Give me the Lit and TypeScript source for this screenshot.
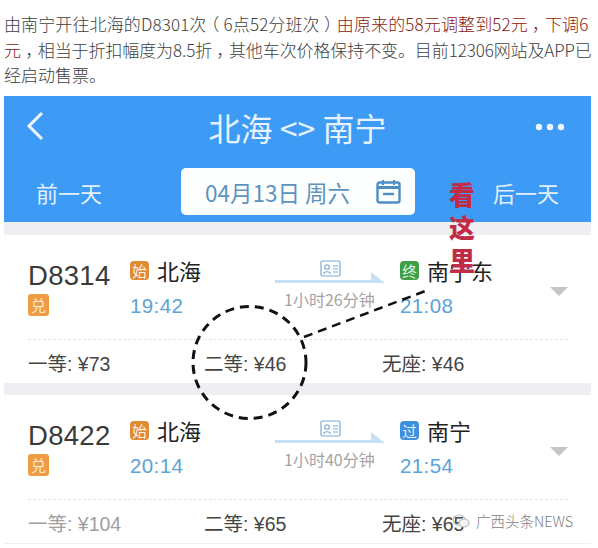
import { LitElement, html, css, svg } from "lit";
import { customElement } from "lit/decorators.js";

interface Train { no: string; from: string; dep: string; dur: string; toTag: string; tagClass: string; to: string; arr: string; p1: string; p2: string; p3: string; dim?: boolean }

const trains: Train[] = [
  { no: "D8314", from: "北海", dep: "19:42", dur: "1小时26分钟", toTag: "终", tagClass: "green", to: "南宁东", arr: "21:08", p1: "一等: ¥73", p2: "二等: ¥46", p3: "无座: ¥46" },
  { no: "D8422", from: "北海", dep: "20:14", dur: "1小时40分钟", toTag: "过", tagClass: "blue", to: "南宁", arr: "21:54", p1: "一等: ¥104", p2: "二等: ¥65", p3: "无座: ¥65", dim: true },
];

@customElement("app-root")
export class AppRoot extends LitElement {
  static styles = css`
    :host { display: block; width: 598px; height: 548px; position: relative; overflow: hidden; background: #fff;
      font-family: "Noto Sans CJK SC", "Liberation Sans", sans-serif; }
    .intro { padding: 11px 0 0 4px; height: 96px; box-sizing: border-box; font-size: 17px; line-height: 25.6px; color: #3e3e3e; white-space: nowrap; font-weight: 300; }
    .intro div { height: 25.6px; }
    .l1 { letter-spacing: 0.12px; }
    .l2 { letter-spacing: -0.1px; }
    .red { color: #8a1a10; }
    .p { font-feature-settings: "halt"; padding: 0 .25em; }
    .shot { margin-left: 4px; width: 587px; }
    .head { background: #3d9bf6; height: 126px; display: flex; flex-direction: column; }
    .nav { height: 62px; display: grid; grid-template-columns: 90px 1fr 90px; align-items: center; }
    .back { margin-left: 22px; display: block; margin-top: -2px; }
    .title { text-align: center; color: #e6f2fd; font-size: 32px; line-height: 60px; font-weight: 400; }
    .dots { justify-self: end; margin-right: 26px; display: block; }
    .dates { height: 47px; margin-top: 10px; display: grid; grid-template-columns: 177px 234px 1fr; align-items: center; color: #e3f0fc; font-size: 22px; line-height: 44px; font-weight: 400; }
    .prev { padding-left: 32px; }
    .next { padding-left: 78px; }
    .pill { background: #fdfefe; height: 47px; border-radius: 5px; display: flex; align-items: center; padding-left: 24px; gap: 26px; color: #5c93bf; font-size: 22.5px; font-weight: 400; box-sizing: border-box; }
    .band { background: #eeeef3; height: 13px; }
    .band.mid { height: 12px; }
    .card { height: 148px; background: #fff; box-sizing: border-box; padding: 0 23px 0 24px; display: flex; flex-direction: column; }
    .top { height: 105px; display: grid; grid-template-columns: 102px 145px 125px 1fr 20px; border-bottom: 1px dashed #e3e3e3; box-sizing: border-box; }
    .c1 { padding-top: 24px; }
    .no { font-size: 27.5px; line-height: 34px; color: #3a3a3a; font-family: "Liberation Sans", sans-serif; letter-spacing: 0.3px; }
    .tag { width: 21px; height: 22px; border-radius: 3px; background: #ee9c45; color: #fde9d2; font-size: 15px; line-height: 22px; text-align: center; margin-top: 1px; }
    .c2, .c4 { padding-top: 23px; }
    .row { display: flex; align-items: center; gap: 8px; height: 24px; }
    .sm { width: 19px; height: 19px; border-radius: 4px; color: #fdf2e4; font-size: 14.5px; line-height: 19px; text-align: center; background: #df8b33; flex: none; }
    .sm.green { background: #3f9e48; color: #dff3df; }
    .sm.blue { background: #3e90dc; color: #e6f2fc; }
    .st { font-size: 22px; line-height: 24px; color: #222; font-weight: 400; }
    .time { font-family: "Liberation Sans", sans-serif; font-size: 20.5px; line-height: 24px; color: #5ba3d8; margin-top: 12px; letter-spacing: 0.4px; }
    .c3 { display: flex; flex-direction: column; align-items: flex-start; padding-top: 25px; box-sizing: border-box; }
    .dur { font-size: 16px; line-height: 20px; color: #a4a4a4; font-weight: 400; margin: 5px 0 0 9px; white-space: nowrap; }
    .c5 { padding-top: 52px; justify-self: end; }
    .prices { display: grid; grid-template-columns: 176px 178px 1fr; height: 42px; padding-top: 3px; box-sizing: border-box; align-items: center; font-size: 19.5px; color: #444; font-weight: 400; font-family: "Liberation Sans", "Noto Sans CJK SC", sans-serif; }
    .dim { color: #a0a0a0; }
    .bottom { border-top: 1px solid #eeeef3; height: 4px; }
    .over { position: absolute; left: 0; top: 0; pointer-events: none; }
    .kan { position: absolute; left: 448px; top: 177px; width: 28px; color: #c22b45; font-size: 26px; line-height: 33px; font-weight: 900; text-align: center; }
    .mark { position: absolute; left: 452px; top: 510px; display: flex; align-items: center; gap: 6px; font-size: 14.500px; color: #7d7d7d; font-weight: 300; }
  `;

  private tpl(t: Train) {
    return html`<div class="card">
      <div class="top">
        <div class="c1"><div class="no">${t.no}</div><div class="tag">兑</div></div>
        <div class="c2">
          <div class="row"><span class="sm">始</span><span class="st">${t.from}</span></div>
          <div class="time">${t.dep}</div>
        </div>
        <div class="c3">
          <svg width="112" height="24" viewBox="0 0 112 24" style="display:block">
            <rect x="46" y="1" width="19" height="15" rx="1.500" fill="none" stroke="#76aad6" stroke-width="1.200"/>
            <circle cx="52" cy="7" r="2.300" fill="none" stroke="#76aad6" stroke-width="1.100"/>
            <path d="M48.500 14c.5-3 6.500-3 7 0M58 6h5M58 9h5M58 12h5" fill="none" stroke="#76aad6" stroke-width="1.100"/>
            <path d="M0 20h96v-8l14 11H0z" fill="#c5e1f8"/>
          </svg>
          <div class="dur">${t.dur}</div>
        </div>
        <div class="c4">
          <div class="row"><span class="sm ${t.tagClass}">${t.toTag}</span><span class="st">${t.to}</span></div>
          <div class="time">${t.arr}</div>
        </div>
        <div class="c5"><svg width="18" height="10" viewBox="0 0 18 10" style="display:block"><path d="M0 0h18l-9 9z" fill="#c4c4c6"/></svg></div>
      </div>
      <div class="prices">
        <span class=${t.dim ? "dim" : ""}>${t.p1}</span><span>${t.p2}</span><span>${t.p3}</span>
      </div>
    </div>`;
  }

  render() {
    return html`
      <div class="intro">
        <div class="l1">由南宁开往北海的D8301次<span class="p">（</span>6点52分班次<span class="p">）</span><span class="red">由原来的58元调整到52元<span class="p">，</span>下调6</span></div>
        <div class="l2"><span class="red">元</span><span class="p">，</span>相当于折扣幅度为8.5折<span class="p">，</span>其他车次价格保持不变。目前12306网站及APP已</div>
        <div>经启动售票。</div>
      </div>
      <div class="shot">
        <div class="head">
          <div class="nav">
            <svg class="back" width="20" height="30" viewBox="0 0 20 30"><path d="M16 2L3 15l13 13" fill="none" stroke="#f2f8fe" stroke-width="3"/></svg>
            <div class="title">北海 &lt;&gt; 南宁</div>
            <svg class="dots" width="30" height="8" viewBox="0 0 30 8"><circle cx="4" cy="4" r="3.200" fill="#eef6fe"/><circle cx="15" cy="4" r="3.200" fill="#eef6fe"/><circle cx="26" cy="4" r="3.200" fill="#eef6fe"/></svg>
          </div>
          <div class="dates">
            <div class="prev">前一天</div>
            <div class="pill"><span>04月13日 周六</span>
              <svg width="25" height="25" viewBox="0 0 25 25"><rect x="1.500" y="3.500" width="22" height="20" rx="2" fill="none" stroke="#4d8fc4" stroke-width="2.400"/><path d="M1.500 8.500h22" stroke="#4d8fc4" stroke-width="3"/><path d="M7 1v5M18 1v5" stroke="#4d8fc4" stroke-width="2"/><path d="M7 15h11" stroke="#4d8fc4" stroke-width="2.400"/></svg>
            </div>
            <div class="next">后一天</div>
          </div>
        </div>
        <div class="band"></div>
        ${this.tpl(trains[0])}
        <div class="band mid"></div>
        ${this.tpl(trains[1])}
        <div class="bottom"></div>
      </div>
      <div class="kan">看<br />这<br />里</div>
      <svg class="over" width="598" height="548" viewBox="0 0 598 548">
        ${svg`<ellipse cx="249.500" cy="362.500" rx="56.500" ry="56" fill="none" stroke="#111" stroke-width="3" stroke-dasharray="9 6"/>
        <path d="M304 337L428 290" fill="none" stroke="#111" stroke-width="2.500" stroke-dasharray="9 6"/>`}
      </svg>
      <div class="mark">
        <svg width="18" height="16" viewBox="0 0 18 16"><ellipse cx="7" cy="7" rx="6" ry="5" fill="none" stroke="#bbb" stroke-width="1.200"/><ellipse cx="12" cy="10" rx="5" ry="4" fill="#f4f4f4" stroke="#bbb" stroke-width="1.200"/></svg>
        <span>广西头条NEWS</span>
      </div>
    `;
  }
}
